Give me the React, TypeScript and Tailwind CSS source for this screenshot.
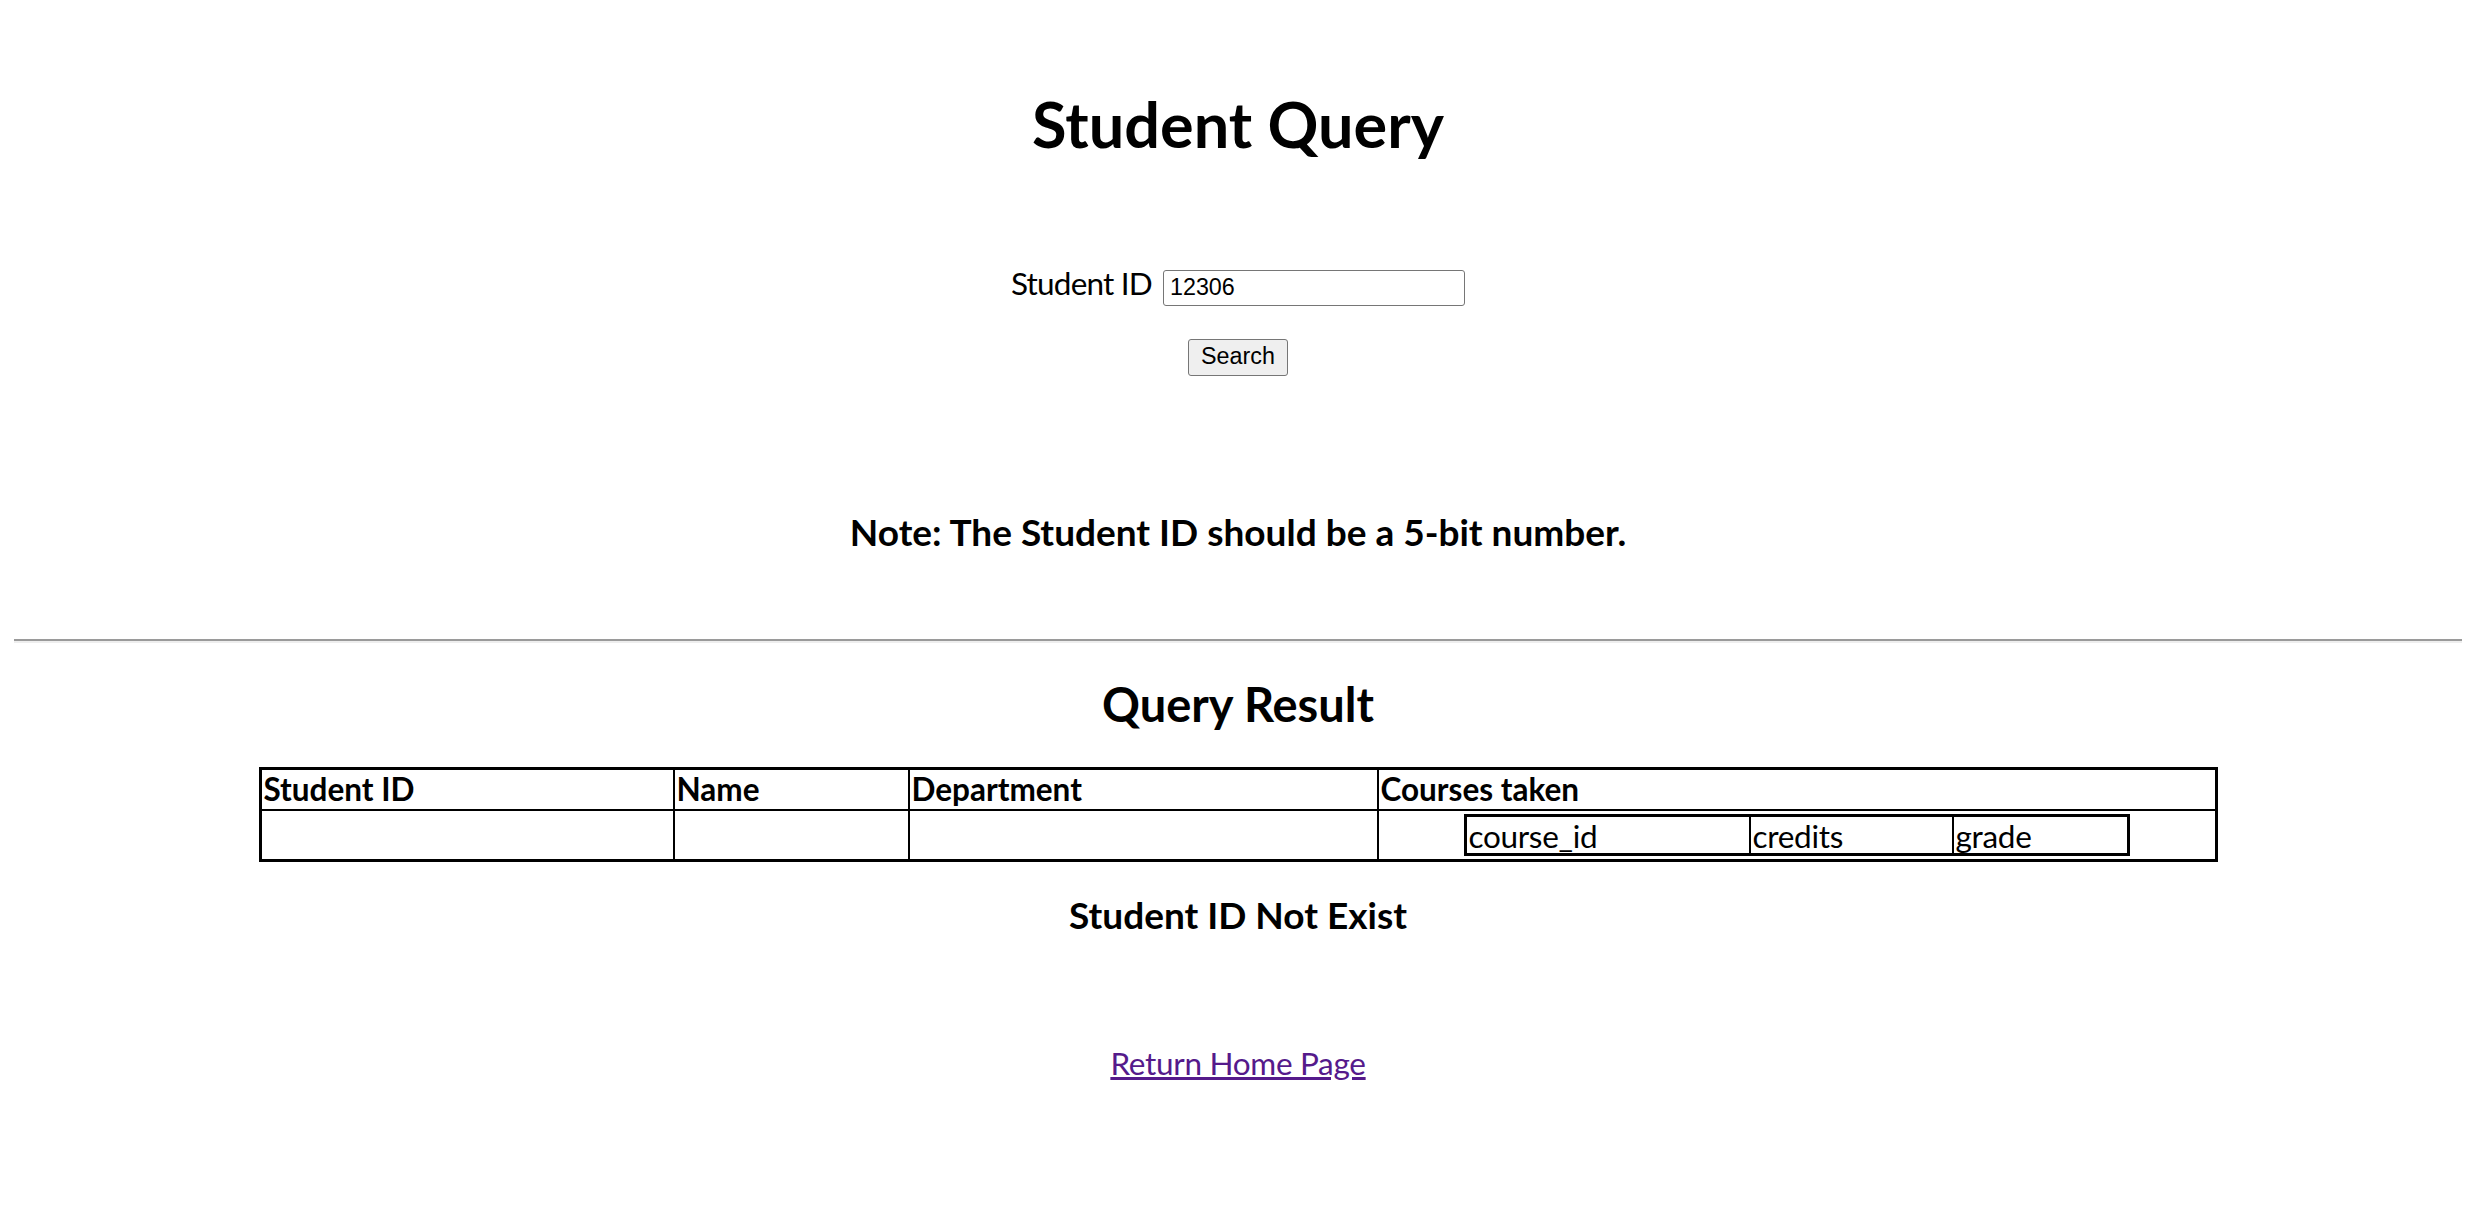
import { useState } from 'react'

const courseCols = ['course_id', 'credits', 'grade']

const App = () => {
  const [studentId, setStudentId] = useState('12306')

  return (
    <div className="min-h-screen bg-white px-[14px] text-black font-['Lato',sans-serif]">
      {/* Query form */}
      <h1 className="pt-[86px] text-center text-[63px] leading-[76px] font-bold">Student Query</h1>

      <div className="mt-[102px] flex items-baseline justify-center gap-[11px]">
        <label htmlFor="sid" className="text-[31.5px] leading-[38px] tracking-[-0.8px]">
          Student ID
        </label>
        <input
          id="sid"
          value={studentId}
          onChange={(e) => setStudentId(e.target.value)}
          className="h-[36px] w-[302px] rounded-[3px] border border-[#767676] bg-white px-[6px] text-[23.3px] font-['Liberation_Sans',Arial,sans-serif] outline-none"
        />
      </div>

      <div className="mt-[33px] flex justify-center">
        <button className="h-[37px] w-[100px] rounded-[3px] border border-[#767676] bg-[#efefef] text-[23.3px] leading-none font-['Liberation_Sans',Arial,sans-serif]">
          Search
        </button>
      </div>

      <h3 className="mt-[134px] text-center text-[37px] leading-[44px] font-bold">
        Note: The Student ID should be a 5-bit number.
      </h3>

      <hr className="mt-[85px] h-0 border-t-2 border-b-2 border-t-[#9a9a9a] border-b-[#eeeeee]" />

      {/* Result */}
      <h2 className="mt-[33px] text-center text-[47px] leading-[56px] font-bold">Query Result</h2>

      <div className="mx-auto mt-[35px] w-[1959px] border-[3px] border-black text-[31.5px]">
        <div className="grid h-[41px] grid-cols-[411px_235px_469px_1fr] border-b-2 border-black font-bold leading-[39px]">
          <div className="pl-[2px]">Student ID</div>
          <div className="border-l-2 border-black pl-[2px]">Name</div>
          <div className="border-l-2 border-black pl-[2px]">Department</div>
          <div className="border-l-2 border-black pl-[2px]">Courses taken</div>
        </div>
        <div className="grid h-[48px] grid-cols-[411px_235px_469px_1fr]">
          <div />
          <div className="border-l-2 border-black" />
          <div className="border-l-2 border-black" />
          <div className="flex items-center justify-center border-l-2 border-black">
            <div className="grid h-[42px] grid-cols-[282px_203px_175px] border-[3px] border-black leading-[38px] tracking-[-0.3px]">
              {courseCols.map((c, i) => (
                <div key={c} className={i === 0 ? 'pl-[2px]' : 'border-l-2 border-black pl-[2px]'}>
                  {c}
                </div>
              ))}
            </div>
          </div>
        </div>
      </div>

      <h3 className="mt-[31px] text-center text-[37px] leading-[44px] font-bold">Student ID Not Exist</h3>

      <div className="mt-[107px] text-center text-[31.5px] leading-[38px] tracking-[-0.3px]">
        <a href="#" className="text-[#551a8b] underline">
          Return Home Page
        </a>
      </div>
    </div>
  )
}

export default App
